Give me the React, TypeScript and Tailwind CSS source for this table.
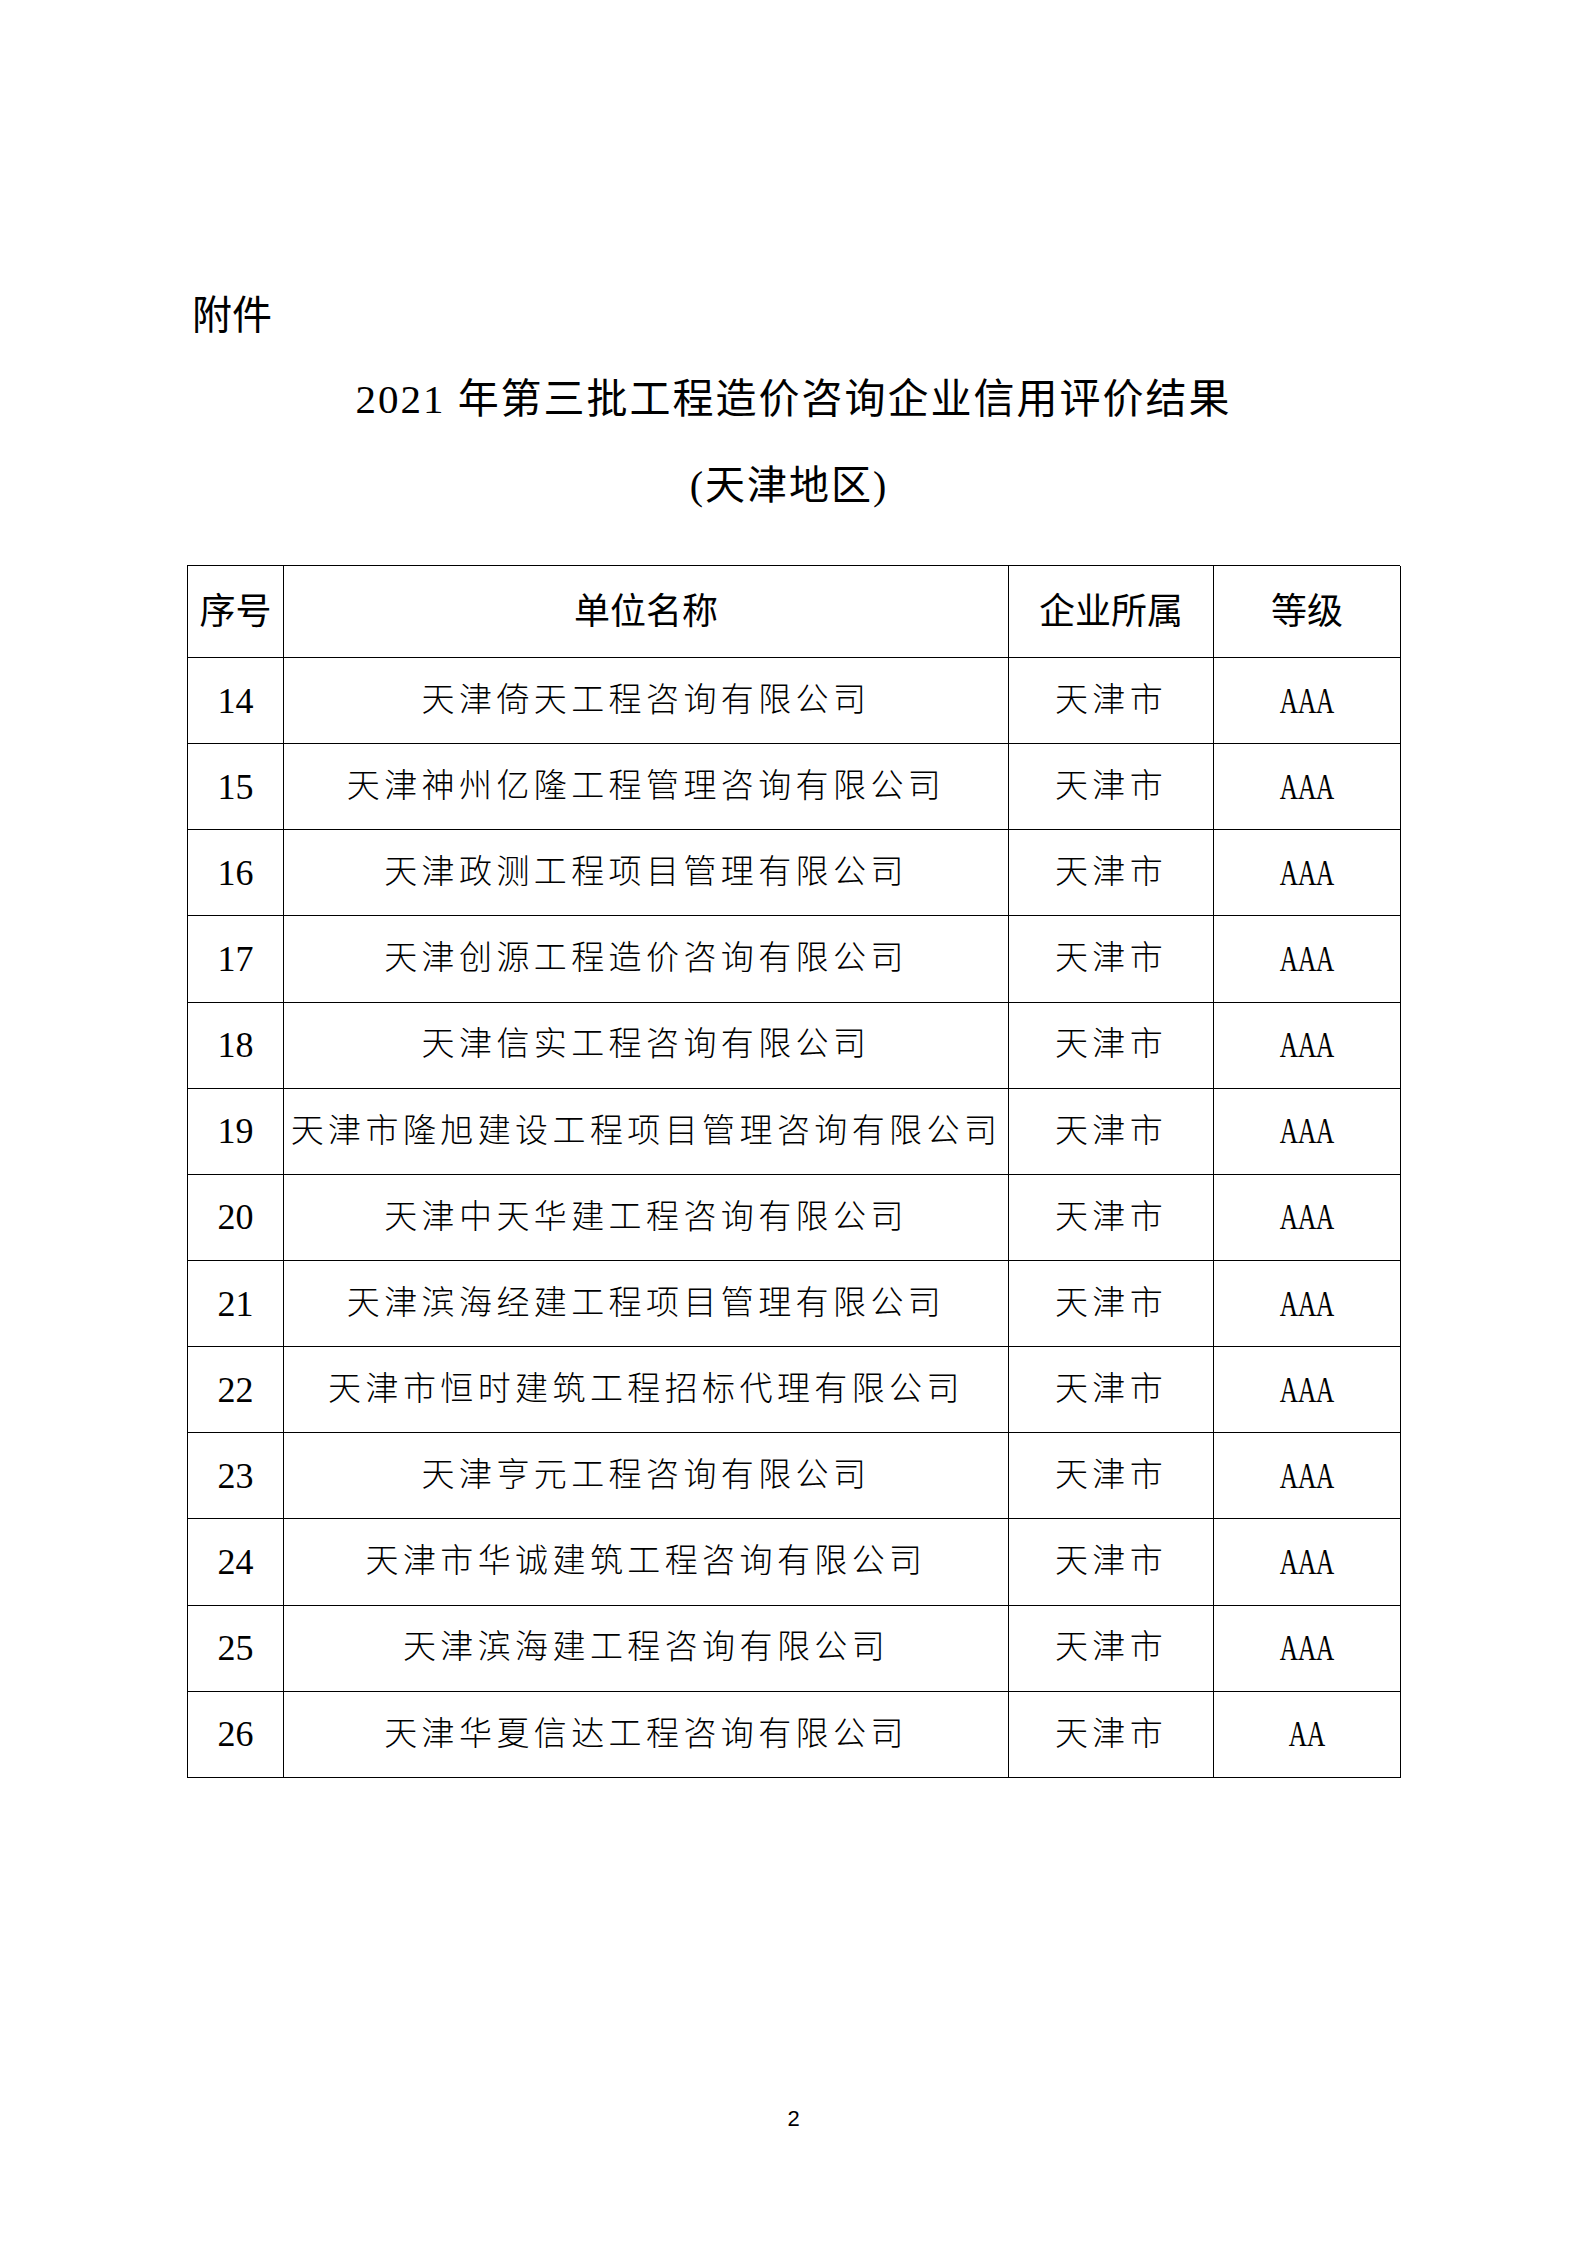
import React from "react";

const rows: [string, string, string, string][] = [
  ["14", "天津倚天工程咨询有限公司", "天津市", "AAA"],
  ["15", "天津神州亿隆工程管理咨询有限公司", "天津市", "AAA"],
  ["16", "天津政测工程项目管理有限公司", "天津市", "AAA"],
  ["17", "天津创源工程造价咨询有限公司", "天津市", "AAA"],
  ["18", "天津信实工程咨询有限公司", "天津市", "AAA"],
  ["19", "天津市隆旭建设工程项目管理咨询有限公司", "天津市", "AAA"],
  ["20", "天津中天华建工程咨询有限公司", "天津市", "AAA"],
  ["21", "天津滨海经建工程项目管理有限公司", "天津市", "AAA"],
  ["22", "天津市恒时建筑工程招标代理有限公司", "天津市", "AAA"],
  ["23", "天津亨元工程咨询有限公司", "天津市", "AAA"],
  ["24", "天津市华诚建筑工程咨询有限公司", "天津市", "AAA"],
  ["25", "天津滨海建工程咨询有限公司", "天津市", "AAA"],
  ["26", "天津华夏信达工程咨询有限公司", "天津市", "AA"],
];

const cell =
  "flex items-center justify-center border-r-[1.5px] border-b-[1.5px] border-black";

export default function App() {
  return (
    <div className="w-[1587px] h-[2245px] bg-white text-black font-['Liberation_Serif','Noto_Sans_CJK_SC',serif] flex flex-col">
      <div className="pt-[296px] pl-[192px] h-[336px] text-[40px] leading-[40px]">附件</div>

      <div className="mt-[43px] flex justify-center text-[41px] leading-[40px] h-[40px] tracking-[2px] whitespace-nowrap">
        2021 年第三批工程造价咨询企业信用评价结果
      </div>

      <div className="mt-[47px] flex justify-center pr-[9px] text-[40px] leading-[40px] h-[40px] tracking-[2px] whitespace-nowrap">
        (天津地区)
      </div>

      <div className="mt-[59px] ml-[187px] w-[1213px] grid grid-cols-[96px_725px_205px_187px] border-l-[1.5px] border-t-[1.5px] border-black">
        <div className={`${cell} h-[92px] text-[36px]`}>序号</div>
        <div className={`${cell} h-[92px] text-[36px]`}>单位名称</div>
        <div className={`${cell} h-[92px] text-[36px]`}>企业所属</div>
        <div className={`${cell} h-[92px] text-[36px]`}>等级</div>
        {rows.map(([no, name, city, grade]) => (
          <React.Fragment key={no}>
            <div className={`${cell} h-[86.15px] text-[36px]`}>{no}</div>
            <div className={`${cell} h-[86.15px] text-[33px] font-light tracking-[4.4px] whitespace-nowrap`}>
              {name}
            </div>
            <div className={`${cell} h-[86.15px] text-[33px] font-light tracking-[4.4px]`}>{city}</div>
            <div className={`${cell} h-[86.15px] text-[36px]`}>
              <span className="inline-block scale-x-[0.7]">{grade}</span>
            </div>
          </React.Fragment>
        ))}
      </div>

      <div className="mt-[330px] flex justify-center text-[22px] leading-[22px] font-['Liberation_Sans',sans-serif]">
        2
      </div>
    </div>
  );
}
